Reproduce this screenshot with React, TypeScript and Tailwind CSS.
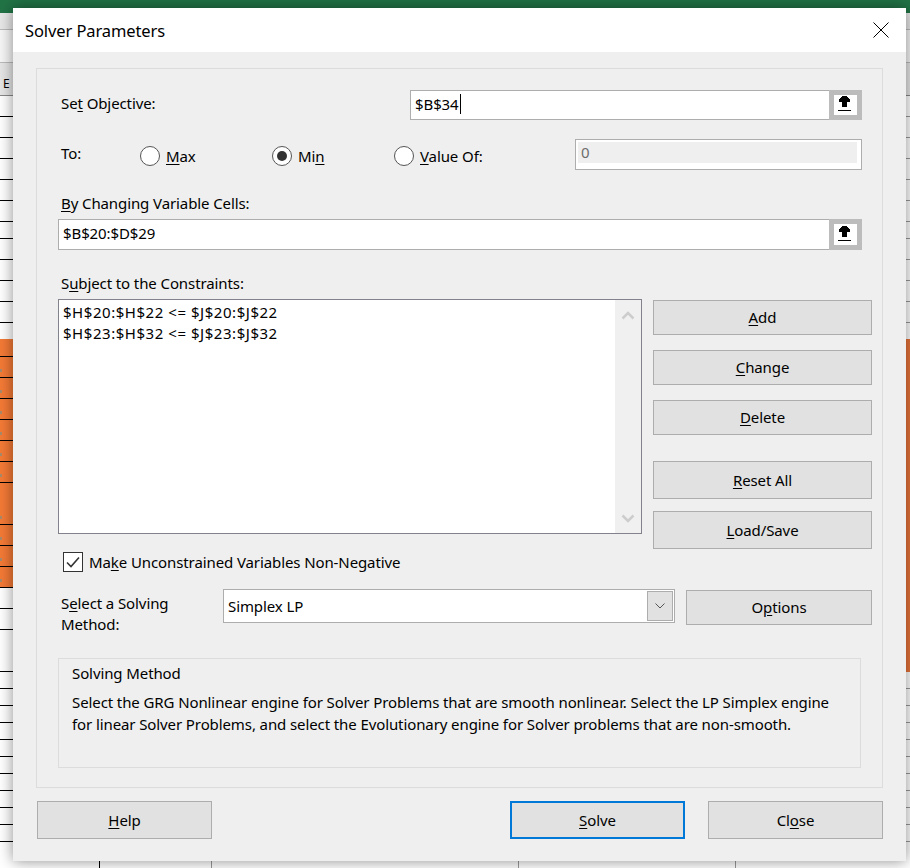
import type { ReactNode } from 'react';

const sheetFont = "font-['Noto_Sans','Open_Sans',sans-serif]";

// grid lines showing round the dialog
const leftLines = [116, 137, 158, 179, 200, 221, 238, 259, 280, 301, 322, 356, 377, 398, 419, 440, 461, 482, 524, 545, 566, 587, 608, 629, 671, 688, 705, 722, 739, 756, 773, 790, 807, 824, 841];
const rightLines = [116, 137, 158, 179, 200, 221, 238, 259, 280, 301, 322, 688, 705, 722, 739, 756, 773, 790, 807, 824, 841];
const cellDots = [369, 390, 411, 432, 453, 474, 516, 537, 558, 579];
const columnLines = [211, 518, 735];

function Key({ children }: { children: ReactNode }) {
  return <span className="underline underline-offset-2 decoration-1">{children}</span>;
}

function Btn({ children, className = '', focused }: { children: ReactNode; className?: string; focused?: boolean }) {
  return (
    <div className={`flex items-center justify-center bg-[#e1e1e1] text-[15px] text-black ${focused ? 'border-2 border-[#0078d7]' : 'border border-[#adadad]'} ${className}`}>
      <span>{children}</span>
    </div>
  );
}

function Radio({ on }: { on?: boolean }) {
  return (
    <span className="flex items-center justify-center w-[20px] h-[20px] rounded-full border border-[#555] bg-white shrink-0">
      {on && <span className="w-[10px] h-[10px] rounded-full bg-[#333]" />}
    </span>
  );
}

function RefButton() {
  return (
    <div className="flex items-center justify-center w-[33px] h-[calc(100%+2px)] -my-px border-[5px] border-[#bcbcbc] bg-white shrink-0 -mr-px">
      <svg width="13" height="15" viewBox="0 0 13 15" shapeRendering="crispEdges" className="-ml-[2px] -mt-[3px]">
        <path d="M4 0h5v1h1v1h1v1h1v3H9v5H4V6H1V3h1V2h1V1h1z" fill="#000" />
        <rect x="0" y="14" width="13" height="1" fill="#000" />
      </svg>
    </div>
  );
}

export default function App() {
  return (
    <div className={`relative w-[910px] h-[868px] overflow-hidden bg-white ${sheetFont}`}>
      {/* excel behind the dialog */}
      <div className="h-[13px] bg-[#217346]" />
      <div className="h-[17px] bg-[#e8e8e8] border-b border-[#bbb]" />
      <div className="h-[33px] bg-[#f6f6f6] border-b border-[#bbb]" />
      <div className="flex h-[33px] items-end pb-[2px] bg-[#e6e6e6] border-b border-[#888] pl-[3px] text-[12px] text-black">E</div>
      {leftLines.map((y) => (
        <div key={y} className="absolute left-0 w-[14px] h-px bg-black" style={{ top: y }} />
      ))}
      {rightLines.map((y) => (
        <div key={y} className="absolute left-[906px] w-[4px] h-px bg-[#999]" style={{ top: y }} />
      ))}
      <div className="absolute left-0 top-[339px] w-[14px] h-[248px] bg-[#f47a36]" />
      {leftLines.filter((y) => y > 339 && y < 587).map((y) => (
        <div key={y} className="absolute left-0 w-[14px] h-px bg-black" style={{ top: y }} />
      ))}
      {cellDots.map((y) => (
        <div key={y} className="absolute left-0 w-[2px] h-[3px] bg-[#a98a6a]" style={{ top: y }} />
      ))}
      <div className="absolute left-[906px] top-[339px] w-[4px] h-[333px] bg-[#e8743a]" />
      <div className="absolute left-[99px] top-[861px] w-px h-[7px] bg-black" />
      {columnLines.map((x) => (
        <div key={x} className="absolute top-[861px] w-px h-[7px] bg-[#999]" style={{ left: x }} />
      ))}

      {/* dialog */}
      <div className="absolute left-[13px] top-[8px] w-[893px] h-[853px] bg-[#efefef] shadow-[0_0_14px_rgba(0,0,0,0.45)] text-[15px] leading-[21px] tracking-[-0.1px] text-black">
        <div className="flex h-[44px] items-center justify-between bg-white pl-[12px] pr-[17px]">
          <span className="text-[16.5px]">Solver Parameters</span>
          <svg width="16" height="16" viewBox="0 0 16 16">
            <path d="M0.5 0.5L15.5 15.5M15.5 0.5L0.5 15.5" stroke="#000" strokeWidth="1" />
          </svg>
        </div>

        <div className="mx-[23px] mt-[16px] h-[720px] border border-[#dcdcdc] pl-[21px] pr-[10px]">
          {/* objective */}
          <div className="flex w-[804px] h-[30px] mt-[21px] items-center">
            <div className="w-[352px] pl-[3px] -mt-[3px]">Se<Key>t</Key> Objective:</div>
            <div className="flex flex-1 h-full bg-white border border-[#adadad] pl-[4px] items-center">
              <div className="flex flex-1 items-center -mt-[2px]">
                <span>$B$34</span>
                <span className="w-px h-[20px] ml-px bg-black" />
              </div>
              <RefButton />
            </div>
          </div>

          {/* to */}
          <div className="flex w-[804px] h-[31px] mt-[19px] items-center">
            <div className="w-[82px] pl-[3px] -mt-[2px]">To:</div>
            <div className="flex w-[132px] items-center gap-[6px] mt-[3px]"><Radio /><span><Key>M</Key>ax</span></div>
            <div className="flex w-[122px] items-center gap-[6px] mt-[3px]"><Radio on /><span>Mi<Key>n</Key></span></div>
            <div className="flex w-[181px] items-center gap-[6px] mt-[3px]"><Radio /><span><Key>V</Key>alue Of:</span></div>
            <div className="flex-1 h-full border border-[#adadad] bg-white p-[2px] pr-[4px]">
              <div className="h-[21px] bg-[#efefef] pl-[3px] leading-[20px] text-[#6d6d6d]">0</div>
            </div>
          </div>

          {/* changing cells */}
          <div className="mt-[23px] pl-[3px] h-[26px]"><Key>B</Key>y Changing Variable Cells:</div>
          <div className="flex w-[804px] h-[31px] bg-white border border-[#adadad] pl-[4px] items-center">
            <span className="flex-1 -mt-[2px]">$B$20:$D$29</span>
            <RefButton />
          </div>

          {/* constraints + buttons */}
          <div className="mt-[23px] pl-[3px] h-[26px]">S<Key>u</Key>bject to the Constraints:</div>
          <div className="flex">
            <div className="flex w-[584px] h-[235px] bg-white border border-[#82828c]">
              <div className="flex-1 pl-[4px] pt-px leading-[22px] tracking-[0.54px]">
                <div>$H$20:$H$22 &lt;= $J$20:$J$22</div>
                <div className="-mt-px">$H$23:$H$32 &lt;= $J$23:$J$32</div>
              </div>
              <div className="flex flex-col justify-between w-[26px] h-full pt-[11px] pb-[10px] items-center bg-[#f0f0f0]">
                <svg width="14" height="9" viewBox="0 0 14 9"><path d="M1.5 7.5L7 2l5.5 5.5" fill="none" stroke="#cdcdcd" strokeWidth="2.5" /></svg>
                <svg width="14" height="9" viewBox="0 0 14 9"><path d="M1.5 1.5L7 7l5.5-5.5" fill="none" stroke="#cdcdcd" strokeWidth="2.5" /></svg>
              </div>
            </div>
            <div className="flex flex-col ml-[11px] w-[219px] pt-px">
              <Btn className="h-[35px]"><Key>A</Key>dd</Btn>
              <Btn className="h-[35px] mt-[15px]"><Key>C</Key>hange</Btn>
              <Btn className="h-[35px] mt-[15px]"><Key>D</Key>elete</Btn>
              <Btn className="h-[38px] mt-[26px]"><Key>R</Key>eset All</Btn>
              <Btn className="h-[38px] mt-[12px]"><Key>L</Key>oad/Save</Btn>
            </div>
          </div>

          {/* non-negative */}
          <div className="flex items-center h-[20px] mt-[3px] pl-[5px] gap-[6px]">
            <span className="flex items-center justify-center w-[20px] h-[20px] border border-[#333] bg-white">
              <svg width="14" height="12" viewBox="0 0 14 12"><path d="M1 6.5L5 10.5L13 1.5" fill="none" stroke="#333" strokeWidth="1.6" /></svg>
            </span>
            <span>Ma<Key>k</Key>e Unconstrained Variables Non-Negative</span>
          </div>

          {/* method */}
          <div className="flex mt-[17px] h-[46px]">
            <div className="w-[165px] pl-[3px] pt-[4px]">S<Key>e</Key>lect a Solving<br />Method:</div>
            <div className="flex w-[452px] h-[34px] bg-white border border-[#adadad] pl-[4px] items-center">
              <span className="flex-1">Simplex LP</span>
              <div className="flex items-center justify-center w-[26px] h-[30px] mr-px border border-[#adadad] bg-[#e1e1e1]">
                <svg width="10" height="6" viewBox="0 0 10 6"><path d="M0.5 0.5L5 5l4.5-4.5" fill="none" stroke="#555" strokeWidth="1" /></svg>
              </div>
            </div>
            <Btn className="w-[186px] h-[35px] ml-[11px] mt-px"><span>O<Key>p</Key>tions</span></Btn>
          </div>

          {/* description */}
          <div className="mt-[23px] w-[803px] h-[110px] border border-[#dcdcdc] pl-[13px] pr-[10px] pt-[4px]">
            <div>Solving Method</div>
            <div className="mt-[7px] leading-[22px]">
              Select the GRG Nonlinear engine for Solver Problems that are smooth nonlinear. Select the LP Simplex engine
              for linear Solver Problems, and select the Evolutionary engine for Solver problems that are non-smooth.
            </div>
          </div>
        </div>

        {/* footer */}
        <div className="flex mt-[13px] ml-[24px]">
          <Btn className="w-[175px] h-[38px]"><Key>H</Key>elp</Btn>
          <Btn focused className="w-[175px] h-[38px] ml-[298px]"><Key>S</Key>olve</Btn>
          <Btn className="w-[175px] h-[38px] ml-[23px]">Cl<Key>o</Key>se</Btn>
        </div>
      </div>
    </div>
  );
}
